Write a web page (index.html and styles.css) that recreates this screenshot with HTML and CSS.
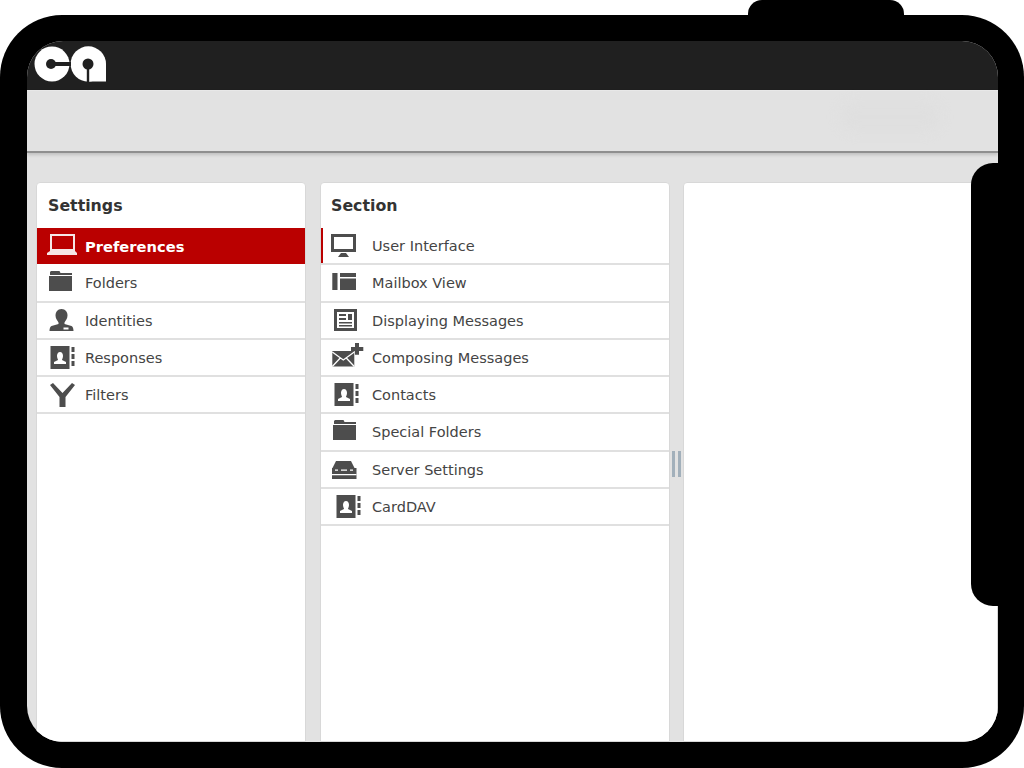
FILE: index.html
```html
<!DOCTYPE html>
<html>
<head>
	<meta charset="utf-8">
	<title>Settings</title>
	<link rel="stylesheet" href="styles.css">
</head>
<body>
	<svg width="0" height="0" class="defs">
		<symbol id="i-laptop" viewBox="0 0 30 24"><path fill-rule="evenodd" d="M3 -1h25v17H3z M5 1v13h21V1z"/><path d="M3 16h25l2 2v2H0v-2z"/></symbol>
		<symbol id="i-folder" viewBox="0 0 30 24"><path d="M3 1l1-1h8.500l1 2h11.500v2H3z"/><path d="M2 5h23v15H2z"/></symbol>
		<symbol id="i-person" viewBox="0 0 30 24"><path d="M14.500 0c4 0 6 3 6 6.500s-2 5-3 7v1.500l7 2c1.500.5 2 3 2 5H2.500c0-2 .5-4.500 2-5l7-2v-1.500c-1-2-3-3.500-3-7s2-6.500 6-6.500z"/><path class="cut" d="M16.500 18.500h5v2h-5z"/></symbol>
		<symbol id="i-book" viewBox="0 0 30 24"><path fill-rule="evenodd" d="M3.500 0h19v23h-19z M13 6c-2 0-3 2-3 4s1 3 1 4l-4 2v2h12v-2l-4-2c0-1 1-2 1-4s-1-4-3-4z"/><path d="M24.500 1h3v5h-3z M24.500 8h3v5h-3z M24.500 15h3v5h-3z"/></symbol>
		<symbol id="i-filter" viewBox="0 0 30 24"><path d="M3 2l3-2 9.500 10L25 0l3 2-9.500 12v10h-6V14z"/></symbol>
		<symbol id="i-screen" viewBox="0 0 30 24"><path fill-rule="evenodd" d="M0 0h25v18H0z M3 3v12h19V3z"/><path d="M10 19h5l3 4H7z"/></symbol>
		<symbol id="i-view" viewBox="0 0 30 24"><path d="M1.300 2h5.200v17H1.300z M9 2h16v4H9z M9 7.500h16V19H9z"/></symbol>
		<symbol id="i-news" viewBox="0 0 30 24"><path fill-rule="evenodd" d="M3 0h23v22H3z M6 3v16h17V3z"/><path d="M8 5h7v2H8z M8 9h7v2H8z M17 5h4v6h-4z M8 13h13v1.500H8z M8 16h13v1.500H8z"/></symbol>
		<symbol id="i-compose" viewBox="0 0 30 24"><path d="M1.300 5h22v15.500h-22z"/><path class="cut-line" d="M1.300 6l11 8 11-8 M1.300 20.500l8-8.500 M23.300 20.500l-8-8.500"/><path d="M24 -3h4v4h4.300v4H28v3.700h-4V5h-4V1h4z"/></symbol>
		<symbol id="i-server" viewBox="0 0 30 24"><path d="M5 3h15l3.500 7H1.500z"/><path d="M1 10h24.500v11H1z"/><path class="cut" d="M4 11.500h3v1.200H4z M10 11.500h6v1.200h-6z M19 11.500h3v1.200h-3z M1 16h24.500v1.200H1z"/></symbol>
	</svg>

	<div class="device">
		<div class="notch"></div>
		<div class="side-key"></div>
		<div class="screen">
			<div class="topbar">
				<svg class="logo" viewBox="0 0 72 36" width="72" height="36">
					<circle cx="18" cy="18" r="17.500" fill="#fff"/>
					<circle cx="54.300" cy="18" r="17.700" fill="#fff"/>
					<rect x="54" y="18" width="18" height="17.500" fill="#fff"/>
					<circle cx="17" cy="18" r="5" fill="#202020"/>
					<rect x="17" y="16" width="20" height="4" fill="#202020"/>
					<circle cx="54" cy="18" r="5.500" fill="#202020"/>
					<rect x="52.800" y="18" width="2.400" height="18" fill="#202020"/>
				</svg>
			</div>
			<div class="toolbar"><div class="toolbar-smudge"></div></div>
			<div class="content">
				<div class="panel panel-settings">
					<h2 class="panel-title">Settings</h2>
					<ul class="list">
						<li class="active"><svg class="ico"><use href="#i-laptop"/></svg><span>Preferences</span></li>
						<li><svg class="ico"><use href="#i-folder"/></svg><span>Folders</span></li>
						<li><svg class="ico"><use href="#i-person"/></svg><span>Identities</span></li>
						<li><svg class="ico"><use href="#i-book"/></svg><span>Responses</span></li>
						<li><svg class="ico"><use href="#i-filter"/></svg><span>Filters</span></li>
					</ul>
				</div>
				<div class="panel panel-section">
					<h2 class="panel-title">Section</h2>
					<ul class="list">
						<li class="selected"><svg class="ico"><use href="#i-screen"/></svg><span>User Interface</span></li>
						<li><svg class="ico"><use href="#i-view"/></svg><span>Mailbox View</span></li>
						<li><svg class="ico"><use href="#i-news"/></svg><span>Displaying Messages</span></li>
						<li><svg class="ico"><use href="#i-compose"/></svg><span>Composing Messages</span></li>
						<li><svg class="ico"><use href="#i-book"/></svg><span>Contacts</span></li>
						<li><svg class="ico"><use href="#i-folder"/></svg><span>Special Folders</span></li>
						<li><svg class="ico"><use href="#i-server"/></svg><span>Server Settings</span></li>
						<li><svg class="ico ico-shift"><use href="#i-book"/></svg><span>CardDAV</span></li>
					</ul>
				</div>
				<div class="splitter"><i></i><i></i></div>
				<div class="panel panel-main"></div>
			</div>
		</div>
	</div>
</body>
</html>
```

FILE: styles.css
```css
*{margin: 0;padding: 0;box-sizing: border-box;}
ul{list-style: none;}
html,body {
	width: 1024px;
	height: 768px;
	overflow: hidden;
	background: #fff;
}
.defs {
	display: block;
	height: 0;
}
symbol {
	overflow: visible;
}
.cut {
	fill: #fff;
}
.cut-line {
	fill: none;
	stroke: #fff;
	stroke-width: 1.300;
}
/* device frame */
.device {
	position: relative;
	width: 1024px;
	height: 753px;
	margin-top: 15px;
	padding: 26px 26px 26px 27px;
	background: #000;
	border-radius: 62px;
}
.notch {
	position: absolute;
	top: -15px;
	left: 748px;
	width: 156px;
	height: 30px;
	background: #000;
	border-radius: 14px 14px 0 0;
}
.side-key {
	position: absolute;
	top: 148px;
	left: 971px;
	width: 27px;
	height: 443px;
	background: #000;
	border-radius: 22px 0 0 22px;
	z-index: 2;
}
.screen {
	height: 701px;
	overflow: hidden;
	background: #e2e2e2;
	border-radius: 36px;
	font-family: "DejaVu Sans", sans-serif;
}
/* header */
.topbar {
	height: 49px;
	padding: 5px 0 0 7px;
	background: #202020;
}
.logo {
	display: block;
}
.toolbar {
	position: relative;
	height: 63px;
	background: #e2e2e2;
	border-top: 1px solid #e8e8e8;
	border-bottom: 2px solid #8f8f8f;
	box-shadow: 0 2px 3px rgba(0,0,0,0.15);
}
.toolbar-smudge {
	position: absolute;
	top: 12px;
	left: 813px;
	width: 100px;
	height: 28px;
	background: #dfdfdf;
	border-radius: 14px;
	filter: blur(6px);
}
/* panels */
.content {
	display: flex;
	height: 589px;
	padding: 29px 0 0 9px;
}
.panel {
	background: #fff;
	border: 1px solid #d8d8d8;
	border-radius: 4px 4px 0 0;
}
.panel-settings {
	width: 270px;
	margin-right: 14px;
}
.panel-section {
	width: 350px;
}
.panel-main {
	flex: 1;
}
.panel-title {
	height: 45px;
	padding: 13px 0 0 10px;
	font-size: 15.800px;
	line-height: 20px;
	font-weight: bold;
	color: #333;
}
.panel-settings .panel-title {
	padding-left: 11px;
}
.list li {
	display: flex;
	align-items: center;
	height: 37.250px;
	padding: 1px 0 0 10px;
	border-bottom: 2px solid #e0e0e0;
	font-size: 14.500px;
	color: #444;
}
.ico {
	flex: none;
	width: 30px;
	height: 24px;
	margin-right: 8px;
	fill: #4d4d4d;
	overflow: visible;
}
.panel-section .ico {
	margin-right: 11px;
}
.panel-section .ico-shift {
	margin-left: 2px;
	margin-right: 9px;
}
.list .active {
	background: #ba0000;
	background-clip: padding-box;
	border-bottom: 1px solid #fff;
	font-size: 14.700px;
	font-weight: bold;
	color: #fff;
}
.active .ico {
	fill: #f6e6e6;
}
.list .selected {
	box-shadow: inset 2px 0 0 #ba0000;
}
/* splitter between section and main */
.splitter {
	display: flex;
	flex: none;
	gap: 2.400px;
	align-items: center;
	justify-content: center;
	width: 13px;
	height: 564px;
}
.splitter i {
	display: block;
	width: 3.300px;
	height: 26px;
	background: #a2b0bb;
}
```
